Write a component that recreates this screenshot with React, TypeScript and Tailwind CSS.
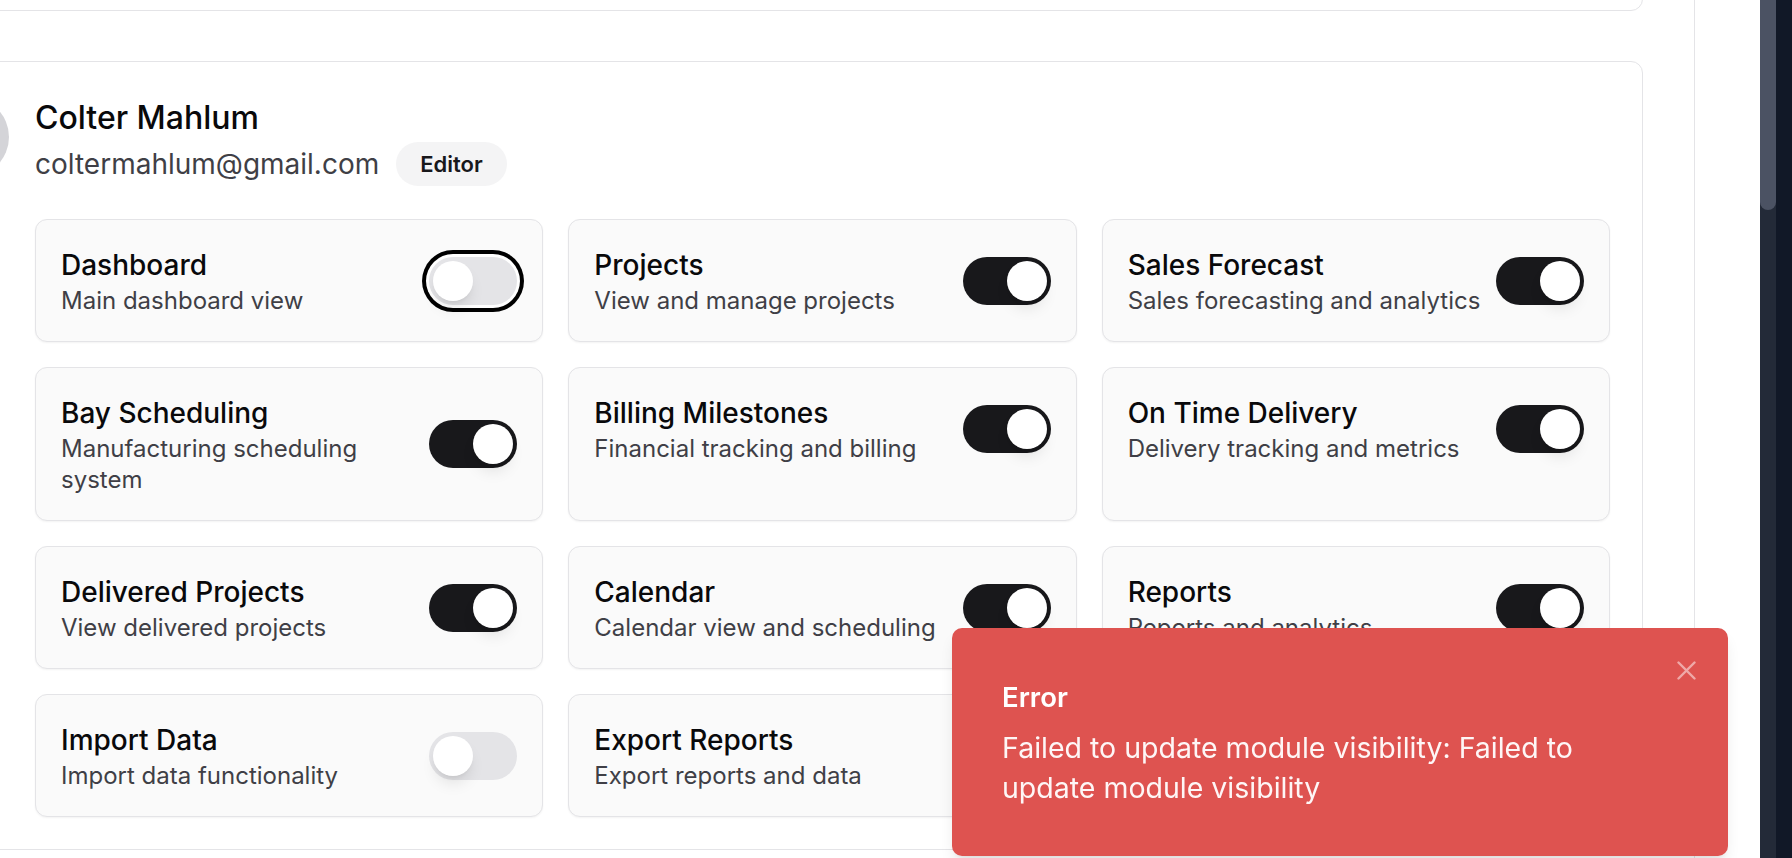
import { useState } from "react";

type Module = {
  key: string;
  title: string;
  description: string;
  enabled: boolean;
};

const initialModules: Module[] = [
  { key: "dashboard", title: "Dashboard", description: "Main dashboard view", enabled: false },
  { key: "projects", title: "Projects", description: "View and manage projects", enabled: true },
  { key: "sales-forecast", title: "Sales Forecast", description: "Sales forecasting and analytics", enabled: true },
  { key: "bay-scheduling", title: "Bay Scheduling", description: "Manufacturing scheduling system", enabled: true },
  { key: "billing", title: "Billing Milestones", description: "Financial tracking and billing", enabled: true },
  { key: "on-time", title: "On Time Delivery", description: "Delivery tracking and metrics", enabled: true },
  { key: "delivered", title: "Delivered Projects", description: "View delivered projects", enabled: true },
  { key: "calendar", title: "Calendar", description: "Calendar view and scheduling", enabled: true },
  { key: "reports", title: "Reports", description: "Reports and analytics", enabled: true },
  { key: "import", title: "Import Data", description: "Import data functionality", enabled: false },
  { key: "export", title: "Export Reports", description: "Export reports and data", enabled: true },
  { key: "settings", title: "Settings", description: "System settings", enabled: true },
];

function Switch({ checked, focused, onClick }: { checked: boolean; focused?: boolean; onClick: () => void }) {
  return (
    <button
      type="button"
      role="switch"
      aria-checked={checked}
      onClick={onClick}
      className={`inline-flex h-[48px] w-[88px] shrink-0 items-center rounded-full border-4 border-transparent ${
        checked ? "bg-[#18181b]" : "bg-[#e4e4e7]"
      } ${focused ? "ring-4 ring-black ring-offset-[3px] ring-offset-white" : ""}`}
    >
      <span
        className={`block h-10 w-10 rounded-full bg-white shadow-lg ${checked ? "translate-x-10" : "translate-x-0"}`}
      />
    </button>
  );
}

function ModuleCard({ module, onToggle }: { module: Module; onToggle: () => void }) {
  return (
    <div className="rounded-xl border border-[#e4e4e7] bg-[#fafafa] px-[25px] py-[25.5px] shadow-xs">
      <div className="flex items-center justify-between gap-2">
        <div className="min-w-0 flex-1">
          <div className="text-[28px] leading-[39px] font-medium text-[#09090b]">{module.title}</div>
          <div className="text-[24px] leading-[31px] text-[#3f3f46]">{module.description}</div>
        </div>
        <Switch checked={module.enabled} focused={module.key === "dashboard"} onClick={onToggle} />
      </div>
    </div>
  );
}

export default function App() {
  const [modules, setModules] = useState(initialModules);
  const [toastOpen, setToastOpen] = useState(true);

  const toggle = (key: string) =>
    setModules((prev) => prev.map((m) => (m.key === key ? { ...m, enabled: !m.enabled } : m)));

  return (
    <div className="relative flex h-[858px] w-full overflow-hidden bg-white font-['Inter','Liberation_Sans',sans-serif]">
      {/* main scroll area */}
      <div className="w-[1695px] shrink-0 overflow-hidden border-r border-[#e4e4e7]">
        <div className="-mt-[189px] mr-[51px] -ml-[104px]">
          <div className="h-[200px] rounded-xl border border-[#e4e4e7] bg-white" />

          <div className="mt-[50px] flex gap-[26px] rounded-xl border border-[#e4e4e7] bg-white p-8">
            <div className="mt-[3px] h-20 w-20 shrink-0 rounded-full bg-[#d4d4d8]" />
            <div className="min-w-0 flex-1">
              <div className="text-[32px] leading-[48px] font-medium text-[#09090b]">Colter Mahlum</div>
              <div className="flex h-[44px] items-center gap-[17px]">
                <span className="text-[28px] leading-[40px] text-[#3f3f46]">coltermahlum@gmail.com</span>
                <span className="flex h-[44px] items-center rounded-full bg-[#f4f4f5] px-6 text-[22px] font-semibold text-[#18181b]">
                  Editor
                </span>
              </div>

              <div className="mt-[33px] grid grid-cols-3 gap-[25px]">
                {modules.map((m) => (
                  <ModuleCard key={m.key} module={m} onToggle={() => toggle(m.key)} />
                ))}
              </div>
            </div>
          </div>
        </div>
      </div>

      <div className="flex-1" />

      {/* scrollbar */}
      <div className="w-4 shrink-0 bg-[#232a38]">
        <div className="h-[210px] rounded-b-full bg-[#4b5263]" />
      </div>
      <div className="w-4 shrink-0 bg-[#111827]" />

      {toastOpen && (
        <div className="fixed right-[64px] bottom-[2px] w-[776px] rounded-[10px] bg-[#de5350] pt-[50px] pr-[100px] pb-[48px] pl-[50px] text-white shadow-lg">
          <div className="text-[27.5px] leading-[38px] font-semibold">Error</div>
          <div className="mt-[12px] text-[28.5px] leading-[40px] text-white/95">
            Failed to update module visibility: Failed to update module visibility
          </div>
          <button
            type="button"
            onClick={() => setToastOpen(false)}
            className="absolute top-[33px] right-[32px] h-[19px] w-[19px]"
          >
            <svg viewBox="0 0 19 19" className="h-[19px] w-[19px]" fill="none">
              <path d="M1.5 1.5L17.5 17.5M17.5 1.5L1.5 17.5" stroke="rgba(255,255,255,0.5)" strokeWidth="2.4" strokeLinecap="round" />
            </svg>
          </button>
        </div>
      )}
    </div>
  );
}
